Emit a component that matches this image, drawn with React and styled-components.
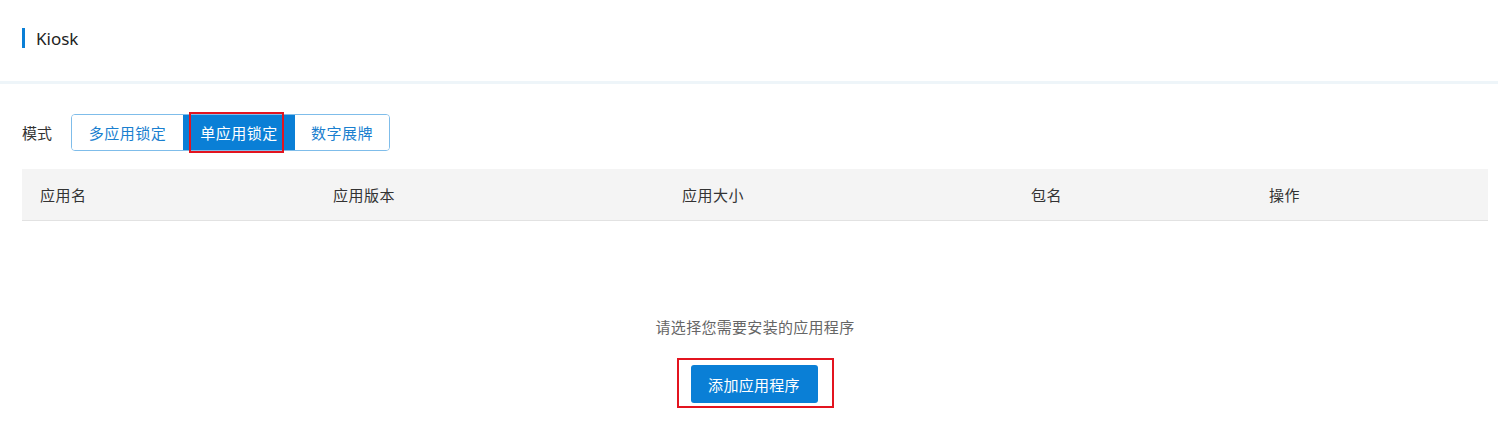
import React, { useState } from "react";
import styled, { createGlobalStyle } from "styled-components";

const Global = createGlobalStyle`
  html, body { margin: 0; padding: 0; background: #fff; }
  body { font-family: "Noto Sans", "Noto Sans CJK SC", sans-serif; color: #333; }
  * { box-sizing: border-box; }
`;

const Page = styled.div`
  position: relative;
  width: 1498px;
  height: 429px;
  overflow: hidden;
  background: #fff;
`;

const Header = styled.div`
  height: 84px;
  padding: 28px 22px 0;
  border-bottom: 3px solid #eef5f9;
`;

const Title = styled.div`
  display: flex;
  align-items: center;
  height: 20px;
  font-size: 17px;
  color: #222;
  &::before {
    content: "";
    width: 3px;
    height: 20px;
    background: #0a7fd6;
    margin-right: 11px;
  }
`;

const Body = styled.div`
  padding: 30px 10px 0 22px;
`;

const ModeRow = styled.div`
  display: flex;
  align-items: center;
  gap: 19px;
  height: 37px;
`;

const cjk = `"Noto Sans CJK SC", "Noto Sans", sans-serif`;

const ModeLabel = styled.span`
  font-family: ${cjk};
  font-size: 15px;
  color: #333;
`;

const Segmented = styled.div`
  display: flex;
  height: 37px;
  border: 1px solid #7fbdea;
  border-radius: 4px;
  overflow: hidden;
`;

const Seg = styled.button`
  width: ${(p) => p.$w}px;
  border: none;
  margin: 0;
  padding: 0;
  font-family: ${cjk};
  font-size: 15px;
  letter-spacing: 0.5px;
  cursor: pointer;
  background: ${(p) => (p.$active ? "#0a7fd6" : "#fff")};
  color: ${(p) => (p.$active ? "#fff" : "#1a7fcf")};
`;

const Mark = styled.span`
  position: absolute;
  inset: 0;
  border: 2px solid #e3141f;
  pointer-events: none;
`;

const Table = styled.div`
  margin-top: 18px;
  width: 1466px;
`;

const HeadRow = styled.div`
  display: grid;
  grid-template-columns: 293px 349px 349px 238px 237px;
  height: 52px;
  background: #f4f4f4;
  border-bottom: 1px solid #e2e2e2;
  align-items: center;
`;

const HeadCell = styled.div`
  padding-left: 18px;
  font-family: ${cjk};
  font-size: 15px;
  letter-spacing: 0.5px;
  color: #333;
`;

const Empty = styled.div`
  display: flex;
  flex-direction: column;
  align-items: center;
  padding-top: 96px;
`;

const EmptyText = styled.div`
  font-family: ${cjk};
  font-size: 15px;
  letter-spacing: 0.3px;
  color: #666;
  line-height: 20px;
`;

const AddWrap = styled.div`
  position: relative;
  margin-top: 21px;
  padding: 7px 16px 5px 14px;
`;

const AddButton = styled.button`
  width: 127px;
  height: 38px;
  border: none;
  border-radius: 3px;
  background: #0a7fd6;
  color: #fff;
  font-family: ${cjk};
  font-size: 15px;
  letter-spacing: 0.3px;
  cursor: pointer;
`;

const OverlayBox = styled.span`
  position: absolute;
  left: 189px;
  top: 112px;
  width: 95px;
  height: 41px;
  border: 2px solid #e3141f;
  pointer-events: none;
`;

const cols = ["应用名", "应用版本", "应用大小", "包名", "操作"];

export default function App() {
  const [mode, setMode] = useState(1);
  const modes = [
    { label: "多应用锁定", w: 111 },
    { label: "单应用锁定", w: 112 },
    { label: "数字展牌", w: 94 },
  ];
  return (
    <Page>
      <Global />
      <Header>
        <Title>Kiosk</Title>
      </Header>
      <Body>
        <ModeRow>
          <ModeLabel>模式</ModeLabel>
          <Segmented>
            {modes.map((m, i) => (
              <Seg key={m.label} $w={m.w} $active={mode === i} onClick={() => setMode(i)}>
                {m.label}
              </Seg>
            ))}
          </Segmented>
        </ModeRow>
        <Table>
          <HeadRow>
            {cols.map((c) => (
              <HeadCell key={c}>{c}</HeadCell>
            ))}
          </HeadRow>
          <Empty>
            <EmptyText>请选择您需要安装的应用程序</EmptyText>
            <AddWrap>
              <AddButton>添加应用程序</AddButton>
              <Mark />
            </AddWrap>
          </Empty>
        </Table>
      </Body>
      <OverlayBox />
    </Page>
  );
}
